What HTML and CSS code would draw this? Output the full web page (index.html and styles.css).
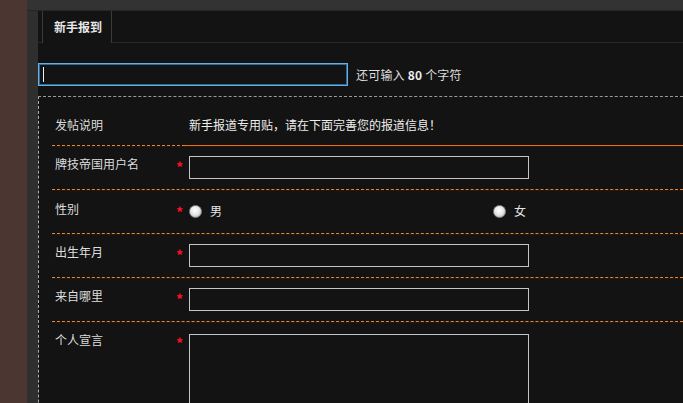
FILE: index.html
```html
<!DOCTYPE html>
<html lang="zh-CN">
<head>
<meta charset="utf-8">
<link rel="stylesheet" href="styles.css">
</head>
<body>
<div class="page">
  <div class="brown"></div>
  <div class="frame">
    <div class="topbar"></div>
    <div class="body">
      <div class="gutter"></div>
      <div class="content">
        <div class="tabs">
          <div class="tab-spacer"></div>
          <div class="tab">新手报到</div>
          <div class="tab-rest"></div>
        </div>
        <div class="title-row">
          <div class="title-input"><span class="caret"></span></div>
          <span class="count">还可输入 <b>80</b> 个字符</span>
        </div>
        <div class="form">
          <div class="row row-first">
            <div class="label"><span>发帖说明</span></div>
            <div class="value text">新手报道专用贴，请在下面完善您的报道信息！</div>
          </div>
          <div class="row">
            <div class="label"><span>牌技帝国用户名</span><span class="star">*</span></div>
            <div class="value"><div class="field"></div></div>
          </div>
          <div class="row">
            <div class="label label-radio"><span>性别</span><span class="star">*</span></div>
            <div class="value radios">
              <span class="opt"><span class="radio"></span>男</span>
              <span class="opt"><span class="radio"></span>女</span>
            </div>
          </div>
          <div class="row">
            <div class="label"><span>出生年月</span><span class="star">*</span></div>
            <div class="value"><div class="field"></div></div>
          </div>
          <div class="row">
            <div class="label"><span>来自哪里</span><span class="star">*</span></div>
            <div class="value"><div class="field"></div></div>
          </div>
          <div class="row row-last">
            <div class="label"><span>个人宣言</span><span class="star">*</span></div>
            <div class="value"><div class="area"></div></div>
          </div>
        </div>
      </div>
    </div>
  </div>
</div>
</body>
</html>
```
FILE: styles.css
```css
html, body {
  margin: 0;
  padding: 0;
  height: 100%;
  overflow: hidden;
}
body {
  font-family: "Noto Sans CJK SC", "Noto Sans", sans-serif;
  font-size: 12px;
  line-height: 16px;
  color: #dddddd;
  background: #4b3631;
}
.page {
  display: flex;
  width: 683px;
  height: 403px;
  overflow: hidden;
}
.brown {
  flex: none;
  width: 27px;
  background: #4b3631;
}
.frame {
  flex: 1;
  min-width: 0;
  display: flex;
  flex-direction: column;
  background: #131313;
  overflow: hidden;
}
.topbar {
  flex: none;
  height: 10px;
  background: #333333;
  border-bottom: 1px solid #262626;
}
.body {
  flex: 1;
  min-height: 0;
  display: flex;
}
.gutter {
  flex: none;
  width: 11px;
  background: #2f2f2f;
}
.content {
  flex: 1;
  min-width: 0;
  display: flex;
  flex-direction: column;
}
.tabs {
  flex: none;
  display: flex;
  height: 32px;
}
.tab-spacer {
  width: 4px;
  border-bottom: 1px solid #2e2525;
}
.tab {
  width: 57px;
  padding-left: 11px;
  border-left: 1px solid #3a3a3a;
  border-right: 1px solid #3a3a3a;
  font-weight: bold;
  color: #e8e8e8;
  line-height: 32px;
}
.tab-rest {
  flex: 1;
  border-bottom: 1px solid #2e2525;
}
.title-row {
  flex: none;
  display: flex;
  align-items: center;
  margin-top: 20px;
  gap: 8px;
  height: 23px;
}
.title-input {
  width: 303px;
  height: 19px;
  border: 1px solid #6aaee0;
  box-shadow: 0 0 0 1px #2c6a9c inset;
  padding: 1px 1px 1px 4px;
  display: flex;
  align-items: center;
}
.caret {
  width: 1px;
  height: 15px;
  background: #f0f0f0;
}
.count {
  color: #dddddd;
  letter-spacing: 0.2px;
}
.count b {
  color: #eeeeee;
}
.form {
  flex: none;
  margin-top: 10px;
  border-top: 1px dashed #9a9a9a;
  border-left: 1px dashed #b0b0b0;
  padding-left: 13px;
  padding-top: 10px;
  height: 400px;
}
.row {
  display: flex;
  border-bottom: 1px dashed #e0883a;
  box-shadow: 0 1px 0 #2a1608;
}
.row-first,
.row-last {
  border-bottom: none;
  box-shadow: none;
}
.label {
  flex: none;
  width: 128px;
  padding: 10px 2px 10px 3px;
  display: flex;
  justify-content: space-between;
  align-items: flex-start;
  color: #dddddd;
}
.label-radio {
  padding-top: 11px;
}
.row-first .label {
  padding-bottom: 12px;
  border-bottom: 1px dashed #e0883a;
  box-shadow: 0 1px 0 #2a1608;
}
.star {
  color: #ff1020;
  font-size: 14px;
  font-weight: bold;
  margin-top: 3px;
}
.value {
  flex: 1;
  min-width: 0;
  padding: 10px 0 10px 4px;
}
.row-first .value {
  border-bottom: 1px solid #ec6c14;
  box-shadow: 0 1px 0 #2a1608;
  color: #eeeeee;
}
.field {
  width: 338px;
  height: 21px;
  border: 1px solid #c4c4c4;
  background: #131313;
}
.row-last .value {
  padding-top: 12px;
}
.area {
  width: 338px;
  height: 100px;
  border: 1px solid #c4c4c4;
  background: #131313;
}
.radios {
  display: flex;
  padding-top: 13px;
  padding-bottom: 14px;
}
.opt {
  flex: none;
  display: flex;
  align-items: center;
  width: 304px;
  gap: 8px;
  color: #e6e6e6;
}
.radio {
  width: 11px;
  height: 11px;
  border-radius: 50%;
  border: 1px solid #8a8a8a;
  background: radial-gradient(circle at 45% 40%, #ffffff 0%, #e8e8e8 45%, #a8a8a8 100%);
}
```
